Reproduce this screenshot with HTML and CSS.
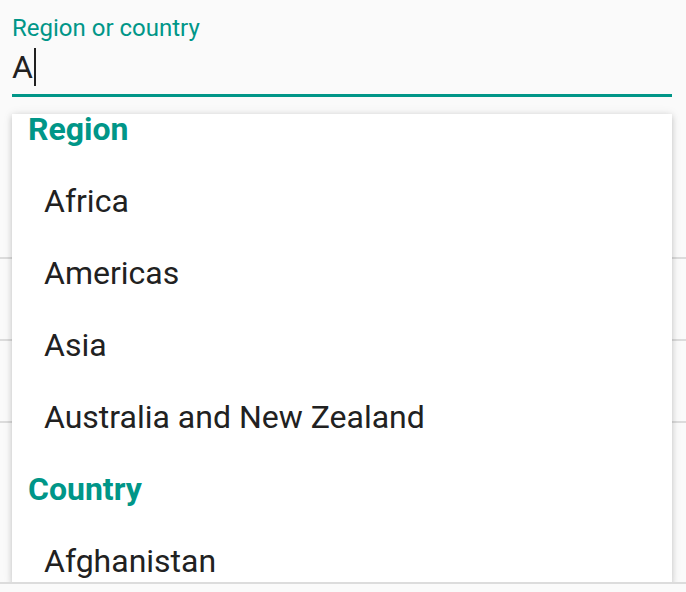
FILE: index.html
```html
<!DOCTYPE html>
<html lang="en">
<head>
<meta charset="utf-8">
<title>Region or country</title>
<link rel="stylesheet" href="styles.css">
</head>
<body>
<div class="screen">
  <div class="field">
    <label class="field-label">Region or country</label>
    <div class="field-input">A<span class="caret"></span></div>
  </div>
  <div class="bg-list">
    <div class="bg-row"></div>
    <div class="bg-row"></div>
    <div class="bg-row bg-row-last"></div>
  </div>
  <div class="dropdown">
    <div class="dropdown-inner">
      <div class="group-title">Region</div>
      <div class="option">Africa</div>
      <div class="option">Americas</div>
      <div class="option">Asia</div>
      <div class="option">Australia and New Zealand</div>
      <div class="group-title">Country</div>
      <div class="option">Afghanistan</div>
    </div>
  </div>
</div>
</body>
</html>
```

FILE: styles.css
```css
html, body {
  margin: 0;
  padding: 0;
}
body {
  background: #fafafa;
  font-family: Roboto, "Noto Sans", sans-serif;
  width: 686px;
  height: 592px;
  overflow: hidden;
}
.screen {
  position: relative;
  height: 582px;
  border-bottom: 2px solid #dcdcdc;
  overflow: hidden;
}
.field {
  margin: 0 14px 0 12px;
  padding-top: 14px;
  padding-bottom: 7px;
  border-bottom: 3px solid #009688;
}
.field-label {
  display: block;
  color: #009688;
  font-size: 24px;
  line-height: 28px;
}
.field-input {
  margin-top: 5px;
  font-size: 32px;
  line-height: 40px;
  height: 40px;
  color: #212121;
  display: flex;
  align-items: center;
}
.caret {
  display: inline-block;
  width: 2px;
  height: 38px;
  background: #212121;
  margin-left: 1px;
}
.bg-list {
  margin-top: 160px;
}
.bg-row {
  height: 80px;
  border-top: 2px solid #dcdcdc;
}
.bg-row-last {
  height: 200px;
}
.dropdown {
  position: absolute;
  top: 114px;
  left: 12px;
  width: 660px;
  height: 470px;
  background: #fff;
  overflow: hidden;
  box-shadow: 0 2px 6px rgba(0,0,0,0.18), 0 0 10px rgba(0,0,0,0.08);
}
.dropdown-inner {
  margin-top: -21px;
}
.group-title {
  line-height: 72px;
  height: 72px;
  font-size: 32px;
  font-weight: 700;
  color: #009688;
  padding-left: 16px;
}
.option {
  line-height: 72px;
  height: 72px;
  font-size: 32px;
  color: #212121;
  padding-left: 32px;
}
```
